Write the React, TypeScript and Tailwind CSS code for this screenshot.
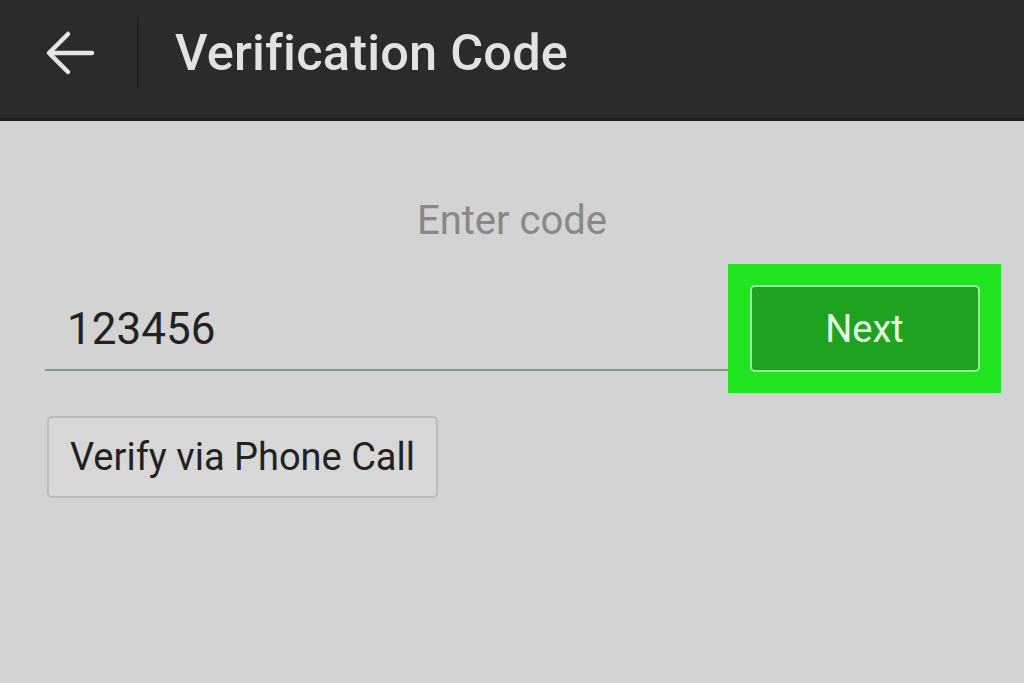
export default function App() {
  return (
    <div
      className="w-[1024px] h-[683px] overflow-hidden bg-[#d3d3d3] flex flex-col"
      style={{ fontFamily: "Roboto, 'Liberation Sans', sans-serif" }}
    >
      {/* Toolbar */}
      <div className="h-[121px] shrink-0 bg-[#2b2b2b] border-b-[3px] border-[#1f1f1f] flex items-center pb-[12px]">
        <div className="w-[137px] flex items-center pl-[45px]">
          <svg width="50" height="46" viewBox="0 0 50 46" fill="none">
            <path
              d="M47 23H5M23 4L4 23l19 19"
              stroke="#e6e6e6"
              strokeWidth="4.5"
              strokeLinecap="round"
              strokeLinejoin="round"
            />
          </svg>
        </div>
        <div className="w-[2px] h-[70px] bg-[#1f1f1f]" />
        <h1 className="ml-[36px] text-[50.5px] font-medium text-[#e2e2e2] tracking-[0.2px] leading-none">
          Verification Code
        </h1>
      </div>

      {/* Body */}
      <div className="flex flex-col">
        <p className="mt-[80px] text-center text-[40px] leading-none text-[#888888]">
          Enter code
        </p>

        <div className="mt-[23px] flex items-start">
          <div className="ml-[45px] w-[683px] mt-[43px] border-b-2 border-[#7e9a7c]">
            <div className="pl-[22px] pb-[18px] text-[44px] leading-none text-[#222222]">
              123456
            </div>
          </div>
          <div className="w-[273px] h-[129px] bg-[#21e421] flex items-center justify-center">
            <button className="w-[230px] h-[87px] rounded-[5px] bg-[#1fa21f] border-2 border-[#9cf09c] text-[38px] text-[#e4f7e4] leading-none">
              Next
            </button>
          </div>
        </div>

        <div className="mt-[23px] ml-[47px]">
          <button className="w-[391px] h-[82px] rounded-[5px] bg-[#d7d7d7] border-2 border-[#bcbcbc] text-[38px] text-[#222222] leading-none">
            Verify via Phone Call
          </button>
        </div>
      </div>
    </div>
  );
}
